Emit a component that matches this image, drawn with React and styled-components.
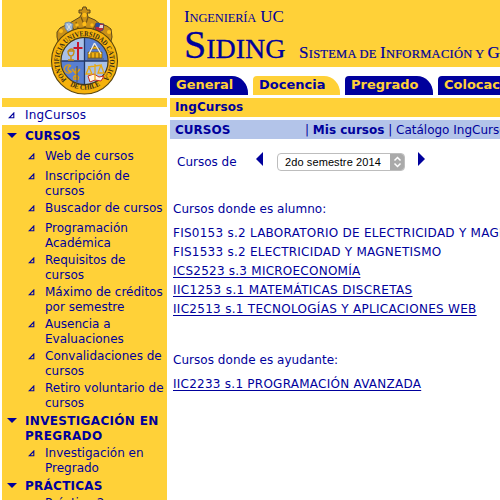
import React from "react";
import styled, { createGlobalStyle } from "styled-components";

const yellow = "#ffd138";
const navy = "#00009c";

const Global = createGlobalStyle`
  body { margin: 0; background: #fff; overflow: hidden; }
  * { box-sizing: border-box; }
`;

const Page = styled.div`
  width: 500px;
  height: 500px;
  overflow: hidden;
  display: flex;
  gap: 3px;
  padding-left: 2px;
  color: ${navy};
  font: 12px/15px Verdana, "DejaVu Sans", sans-serif;
`;

const Sidebar = styled.aside`
  position: relative;
  width: 165px;
  flex: none;
  white-space: nowrap;
`;
const BrandBand = styled.div`
  height: 67px;
  background: ${yellow};
`;
const Stripe = styled.div`
  height: 9px;
  margin-top: 31px;
  background: ${yellow};
`;
const Crest = styled.svg`
  position: absolute;
  left: 47px;
  top: 5px;
  width: 71px;
  height: 92px;
`;
const HomeRow = styled.div`
  height: 18px;
  display: flex;
  gap: 10px;
  padding: 1px 0 0 6px;
`;
const Menu = styled.nav`
  height: 375px;
  padding-top: 4px;
  background: ${yellow};
  overflow: hidden;
`;
const MenuRow = styled.div`
  display: flex;
  gap: ${(p) => (p.$heading ? 8 : 10)}px;
  padding-left: ${(p) => (p.$heading ? 5 : 26)}px;
  margin-top: ${(p) => p.$gap}px;
  font-weight: ${(p) => (p.$heading ? "bold" : "normal")};
`;
const MenuIcon = styled.svg`
  flex: none;
  margin-top: ${(p) => p.$top}px;
`;
const Label = styled.span`
  white-space: pre-line;
  letter-spacing: ${(p) => p.$track || 0}px;
`;

const Main = styled.main`
  width: 330px;
  overflow: hidden;
  white-space: nowrap;
`;
const Header = styled.header`
  height: 67px;
  padding: 7px 0 0 14px;
  background: ${yellow};
  font-family: "Liberation Serif", serif;
`;
const Faculty = styled.div`
  height: 19px;
  font-size: 17px;
  line-height: 20px;
  letter-spacing: -0.15px;
`;
const TitleRow = styled.div`
  display: flex;
  align-items: baseline;
  height: 38px;
  line-height: 38px;
`;
const Siding = styled.div`
  flex: none;
  width: 115px;
  font-size: 40px;
  -webkit-text-stroke: 0.3px ${navy};
`;
const Tagline = styled.div`
  font-size: 17px;
  letter-spacing: 0.25px;
  -webkit-text-stroke: 0.2px ${navy};
`;
const Small = styled.span`
  font-size: ${(p) => p.$size}px;
`;
const Tabs = styled.div`
  display: flex;
  gap: 5px;
  height: 31px;
  padding-top: 9px;
`;
const Tab = styled.div`
  width: ${(p) => p.$w}px;
  height: 19px;
  flex: none;
  padding-left: 6px;
  border-radius: 4px 16px 0 0 / 4px 17px 0 0;
  background: ${(p) => (p.$active ? yellow : navy)};
  color: ${(p) => (p.$active ? navy : yellow)};
  font-weight: bold;
  font-size: 13px;
  line-height: 17px;
`;
const Crumb = styled.div`
  height: 19px;
  padding-left: 5px;
  background: ${yellow};
  font-weight: bold;
  line-height: 19px;
  letter-spacing: 0.1px;
`;
const SubNav = styled.div`
  display: flex;
  height: 19px;
  margin-top: 3px;
  padding-left: 5px;
  background: #b3c4e9;
  line-height: 20px;
`;
const Section = styled.b`
  flex: none;
  width: 130px;
`;
const Picker = styled.div`
  display: flex;
  height: 62px;
  padding: 13px 0 0 7px;
`;
const PickerLabel = styled.span`
  width: 79px;
  padding-top: 3px;
`;
const Arrow = styled.svg`
  flex: none;
  width: 7px;
  height: 14px;
`;
const SelectBox = styled.div`
  display: flex;
  width: 128px;
  height: 18px;
  margin: 1px 13px 0 14px;
  overflow: hidden;
  border: 1px solid #bdbdbd;
  border-radius: 4px;
  color: #000;
  font: 11px/17px "Liberation Sans", sans-serif;
  padding-left: 7px;
  justify-content: space-between;
  letter-spacing: 0.1px;
`;
const Stepper = styled.svg`
  width: 15px;
  height: 18px;
  margin: -1px -1px 0 0;
  background: #aaa;
`;
const Group = styled.section`
  padding-left: 3px;
  margin-bottom: 33px;
`;
const GroupTitle = styled.div`
  height: 23px;
  line-height: 17px;
  letter-spacing: 0.04px;
`;
const Course = styled.div`
  height: 19px;
  line-height: 19px;
`;
const CourseLink = styled.a`
  text-decoration: ${(p) => (p.$plain ? "none" : "underline")};
  text-underline-offset: 2px;
  text-decoration-thickness: 1px;
  letter-spacing: ${(p) => p.$track || 0}px;
`;

const Leaf = () => (
  <MenuIcon $top={4} width="7" height="7" viewBox="0 0 7 7">
    <path d="M1.3 5.8H5.8V1Z" fill="none" stroke={navy} strokeWidth="1.1" />
  </MenuIcon>
);
const Down = () => (
  <MenuIcon $top={4} width="10" height="5" viewBox="0 0 10 5">
    <path d="M0 0H10L5 5Z" fill={navy} />
  </MenuIcon>
);

const menu = [
  ["CURSOS", 0, true, 0],
  ["Web de cursos", 5, false, 0.08],
  ["Inscripción de\ncursos", 5, false, 0.08],
  ["Buscador de cursos", 2, false, 0],
  ["Programación\nAcadémica", 5, false, 0],
  ["Requisitos de\ncursos", 2, false, 0],
  ["Máximo de créditos\npor semestre", 2, false, 0],
  ["Ausencia a\nEvaluaciones", 2, false, 0],
  ["Convalidaciones de\ncursos", 2, false, 0],
  ["Retiro voluntario de\ncursos", 2, false, 0],
  ["INVESTIGACIÓN EN\nPREGRADO", 3, true, 0.33],
  ["Investigación en\nPregrado", 2, false, 0],
  ["PRÁCTICAS", 3, true, 0.25],
  ["Práctica 2", 2, false, 0],
];

const Shield = () => (
  <Crest viewBox="49 5 71 92">
    <defs>
      <path id="ringTop" d="M66.8 79.4A25.3 25.3 0 1 1 102.2 79.4" />
      <path id="ringBottom" d="M62 79.5A29.8 29.8 0 0 0 107 79.5" />
      <clipPath id="disc"><circle cx="84.5" cy="61" r="23.3" /></clipPath>
    </defs>
    <path d="M59 45L57 37L57 32L60 28L64 26L68 24L75 20L80 17L82 13H79V10H82L83 7H86L87 10H90V13H87L88 17L95 20L100 24L107 26L111 29L112 37L110 45Z" fill="#c99018" stroke="#5c471b" strokeWidth="1" />
    <path d="M65 39Q84 17 104 39M66 29L73 34M81 17L85 27L88 17M96 24L92 31M76 22L79 31M71 25L76 33" fill="none" stroke="#765514" strokeWidth="1.2" />
    <g fill="#ffbd18">
      <circle cx="84.5" cy="15" r="2.3" /><circle cx="84.5" cy="24" r="2.2" />
      <circle cx="77" cy="25" r="1.7" /><circle cx="92" cy="25" r="1.7" />
      <circle cx="61" cy="31" r="2" /><circle cx="109" cy="32" r="2" />
    </g>
    <path d="M65 23L69 22L73 24L72 31L68 32L65 28Z" fill="#9eb8d9" stroke="#617da1" strokeWidth=".8" />
    <path d="M67 24L71 30M71 24L67 30" stroke="#e5e4d5" />
    <path d="M96 23L104 24L103 30L99 32L95 29Z" fill="#bd293a" stroke="#39436e" strokeWidth=".8" />
    <path d="M96 23H100V27H96Z" fill="#294b9b" /><path d="M100 25H103V28H99Z" fill="#e7d1cf" />
    <circle cx="84.5" cy="61" r="33" fill="#f6b20c" stroke="#5b460d" strokeWidth="1.1" />
    <g clipPath="url(#disc)">
      <path d="M60 37H109V86H60Z" fill="#a9c1e8" />
      <path d="M84.5 37H109V61H84.5V85H60V61H84.5Z" fill="#587fd1" />
      <path d="M84.5 37V85M60 61H109" stroke="#243968" strokeWidth="1.3" />
    </g>
    <circle cx="84.5" cy="61" r="23.6" fill="none" stroke="#42381e" strokeWidth="1.2" />
    <path d="M78 42V60M73.5 48H82.5" stroke="#c5192c" strokeWidth="2" />
    <path d="M68 51H74Q74 56 71 56Q68 56 68 51M71 56V60M68 60H74M68 51Q72 47 74 51" fill="none" stroke="#c58a12" strokeWidth="1.4" />
    <path d="M88 52H102V58H88ZM87 59H104M90 49H100L95 46Z" fill="#efb011" stroke="#6c5215" strokeWidth=".7" />
    <path d="M91 53V58M95 53V58M99 53V58" stroke="#745414" />
    <path d="M94.5 43L89 54M94.5 43L101 54" stroke="#f1eee1" strokeWidth="1.3" />
    <path d="M71 66A4 4 0 1 0 71 72A3 3 0 1 1 71 66M69 70L72 72M76 68V80M73 70L79 78M79 70L73 78M73 79H79M72 69Q76 75 80 69" fill="none" stroke="#d99d1c" strokeWidth="1.4" />
    <path d="M77 66V82" stroke="#524216" strokeWidth=".8" />
    <path d="M88 76L94 74L99 77L104 76L101 81L95 80L90 82Z" fill="#fff3df" stroke="#c52e25" strokeWidth="1" />
    <path d="M95 64V80M88 67L102 65M89 67L86 74H92L89 67M101 65L98 73H104L101 65" fill="none" stroke="#e9a911" strokeWidth="1.3" />
    <g fill="#342b15" fontFamily="Liberation Serif, serif" fontSize="7.5" fontWeight="bold">
      <text><textPath href="#ringTop" textLength="118" lengthAdjust="spacingAndGlyphs">PONTIFICIA UNIVERSIDAD CATOLICA</textPath></text>
      <text><textPath href="#ringBottom" startOffset="10" textLength="32" lengthAdjust="spacingAndGlyphs">DE CHILE</textPath></text>
    </g>
  </Crest>
);

export default function App() {
  return (
    <>
      <Global />
      <Page>
        <Sidebar>
          <BrandBand />
          <Shield />
          <Stripe />
          <HomeRow><Leaf /><Label $track={0.2}>IngCursos</Label></HomeRow>
          <Menu>
            {menu.map(([text, gap, heading, track]) => (
              <MenuRow key={text} $gap={gap} $heading={heading}>
                {heading ? <Down /> : <Leaf />}
                <Label $track={track}>{text}</Label>
              </MenuRow>
            ))}
          </Menu>
        </Sidebar>
        <Main>
          <Header>
            <Faculty>I<Small $size={12.5}>NGENIERÍA</Small> UC</Faculty>
            <TitleRow>
              <Siding>S<Small $size={28}>IDING</Small></Siding>
              <Tagline>
                S<Small $size={12.5}>ISTEMA DE </Small>I<Small $size={12.5}>NFORMACIÓN Y </Small>G<Small $size={12.5}>ESTIÓN</Small>
              </Tagline>
            </TitleRow>
          </Header>
          <Tabs>
            <Tab $w={78}>General</Tab>
            <Tab $w={87} $active>Docencia</Tab>
            <Tab $w={88}>Pregrado</Tab>
            <Tab $w={110}>Colocaciones</Tab>
          </Tabs>
          <Crumb>IngCursos</Crumb>
          <SubNav>
            <Section>CURSOS</Section>
            <span>| <b>Mis cursos</b> | Catálogo IngCursos</span>
          </SubNav>
          <Picker>
            <PickerLabel>Cursos de</PickerLabel>
            <Arrow viewBox="0 0 7 14"><path d="M7 0V14L0 7Z" fill={navy} /></Arrow>
            <SelectBox>
              2do semestre 2014
              <Stepper viewBox="0 0 15 18">
                <path d="M4.5 7.5L7.5 4.5L10.5 7.5M4.5 10.5L7.5 13.5L10.5 10.5" fill="none" stroke="#fff" strokeWidth="1.5" />
              </Stepper>
            </SelectBox>
            <Arrow viewBox="0 0 7 14"><path d="M0 0V14L7 7Z" fill={navy} /></Arrow>
          </Picker>
          <Group>
            <GroupTitle>Cursos donde es alumno:</GroupTitle>
            <Course><CourseLink $plain $track={0.25}>FIS0153 s.2 LABORATORIO DE ELECTRICIDAD Y MAGNETISMO</CourseLink></Course>
            <Course><CourseLink $plain $track={0.25}>FIS1533 s.2 ELECTRICIDAD Y MAGNETISMO</CourseLink></Course>
            <Course><CourseLink $track={0.24}>ICS2523 s.3 MICROECONOMÍA</CourseLink></Course>
            <Course><CourseLink $track={0.37}>IIC1253 s.1 MATEMÁTICAS DISCRETAS</CourseLink></Course>
            <Course><CourseLink $track={0.29}>IIC2513 s.1 TECNOLOGÍAS Y APLICACIONES WEB</CourseLink></Course>
          </Group>
          <Group>
            <GroupTitle>Cursos donde es ayudante:</GroupTitle>
            <Course><CourseLink $track={0.25}>IIC2233 s.1 PROGRAMACIÓN AVANZADA</CourseLink></Course>
          </Group>
        </Main>
      </Page>
    </>
  );
}
